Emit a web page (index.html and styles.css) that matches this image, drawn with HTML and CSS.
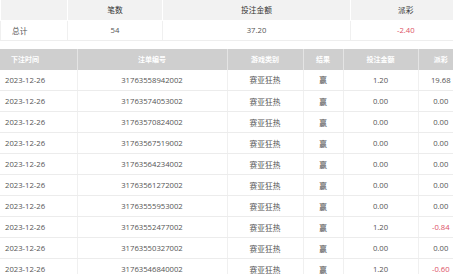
FILE: index.html
```html
<!DOCTYPE html>
<html lang="zh-CN">
  <head>
    <meta charset="UTF-8" />
    <meta name="viewport" content="width=device-width, initial-scale=1.0" />
    <title>投注记录</title>
    <link rel="stylesheet" href="styles.css">
  </head>
  <body>
    <!-- 汇总 -->
    <table class="summary">
      <colgroup>
        <col style="width: 67px" />
        <col style="width: 95px" />
        <col style="width: 188px" />
        <col style="width: 110px" />
      </colgroup>
      <thead>
        <tr>
          <th></th>
          <th>笔数</th>
          <th>投注金额</th>
          <th>派彩</th>
        </tr>
      </thead>
      <tbody>
        <tr>
          <td class="label">总计</td>
          <td>54</td>
          <td>37.20</td>
          <td class="neg">-2.40</td>
        </tr>
      </tbody>
    </table>

    <!-- 明细 -->
    <table class="records">
      <colgroup>
        <col style="width: 77px" />
        <col style="width: 150px" />
        <col style="width: 76px" />
        <col style="width: 40px" />
        <col style="width: 75px" />
        <col style="width: 45px" />
      </colgroup>
      <thead>
        <tr>
          <th class="first">下注时间</th>
          <th>注单编号</th>
          <th>游戏类别</th>
          <th>结果</th>
          <th>投注金额</th>
          <th>派彩</th>
        </tr>
      </thead>
      <tbody>
        <tr><td class="date">2023-12-26</td><td>31763558942002</td><td>赛亚狂热</td><td>赢</td><td>1.20</td><td>19.68</td></tr>
        <tr><td class="date">2023-12-26</td><td>31763574053002</td><td>赛亚狂热</td><td>赢</td><td>0.00</td><td>0.00</td></tr>
        <tr><td class="date">2023-12-26</td><td>31763570824002</td><td>赛亚狂热</td><td>赢</td><td>0.00</td><td>0.00</td></tr>
        <tr><td class="date">2023-12-26</td><td>31763567519002</td><td>赛亚狂热</td><td>赢</td><td>0.00</td><td>0.00</td></tr>
        <tr><td class="date">2023-12-26</td><td>31763564234002</td><td>赛亚狂热</td><td>赢</td><td>0.00</td><td>0.00</td></tr>
        <tr><td class="date">2023-12-26</td><td>31763561272002</td><td>赛亚狂热</td><td>赢</td><td>0.00</td><td>0.00</td></tr>
        <tr><td class="date">2023-12-26</td><td>31763555953002</td><td>赛亚狂热</td><td>赢</td><td>0.00</td><td>0.00</td></tr>
        <tr><td class="date">2023-12-26</td><td>31763552477002</td><td>赛亚狂热</td><td>赢</td><td>1.20</td><td class="neg">-0.84</td></tr>
        <tr><td class="date">2023-12-26</td><td>31763550327002</td><td>赛亚狂热</td><td>赢</td><td>0.00</td><td>0.00</td></tr>
        <tr><td class="date">2023-12-26</td><td>31763546840002</td><td>赛亚狂热</td><td>赢</td><td>1.20</td><td class="neg">-0.60</td></tr>
      </tbody>
    </table>
  </body>
</html>
```

FILE: styles.css
```css
* {
  margin: 0;
  padding: 0;
  box-sizing: border-box;
}

body {
  background: #fff;
  overflow: hidden;
  font-family: "Open Sans", "Noto Sans CJK SC", sans-serif;
  font-size: 7.7px;
  color: #555;
}

table {
  border-collapse: collapse;
  table-layout: fixed;
}

td,
th {
  text-align: center;
  white-space: nowrap;
  overflow: hidden;
}

/* Summary table on top */
.summary {
  width: 460px;
}

.summary th {
  height: 20px;
  background: #f2f2f2;
  color: #333;
  font-weight: normal;
  border-left: 1px solid #fff;
  border-bottom: 1px solid #fff;
}

.summary td {
  height: 20px;
  border-left: 1px solid #f0f0f0;
  border-bottom: 1px solid #eee;
}

.summary .label {
  text-align: left;
  padding-left: 11px;
}

/* Records table */
.records {
  width: 463px;
  margin-top: 8px;
}

.records th {
  height: 21px;
  background: #cfcfcf;
  color: #fff;
  font-size: 7px;
  font-weight: bold;
  font-family: "Noto Sans CJK SC", sans-serif;
  border-left: 1px solid #e4e4e4;
}

.records th.first {
  text-align: left;
  padding-left: 11px;
  border-left: none;
}

.records td {
  height: 21px;
  border-left: 1px solid #f0f0f0;
  border-bottom: 1px solid #ececec;
}

.records td.date {
  text-align: left;
  padding-left: 5px;
  border-left: none;
}

.neg {
  color: #dc5266;
}
```
